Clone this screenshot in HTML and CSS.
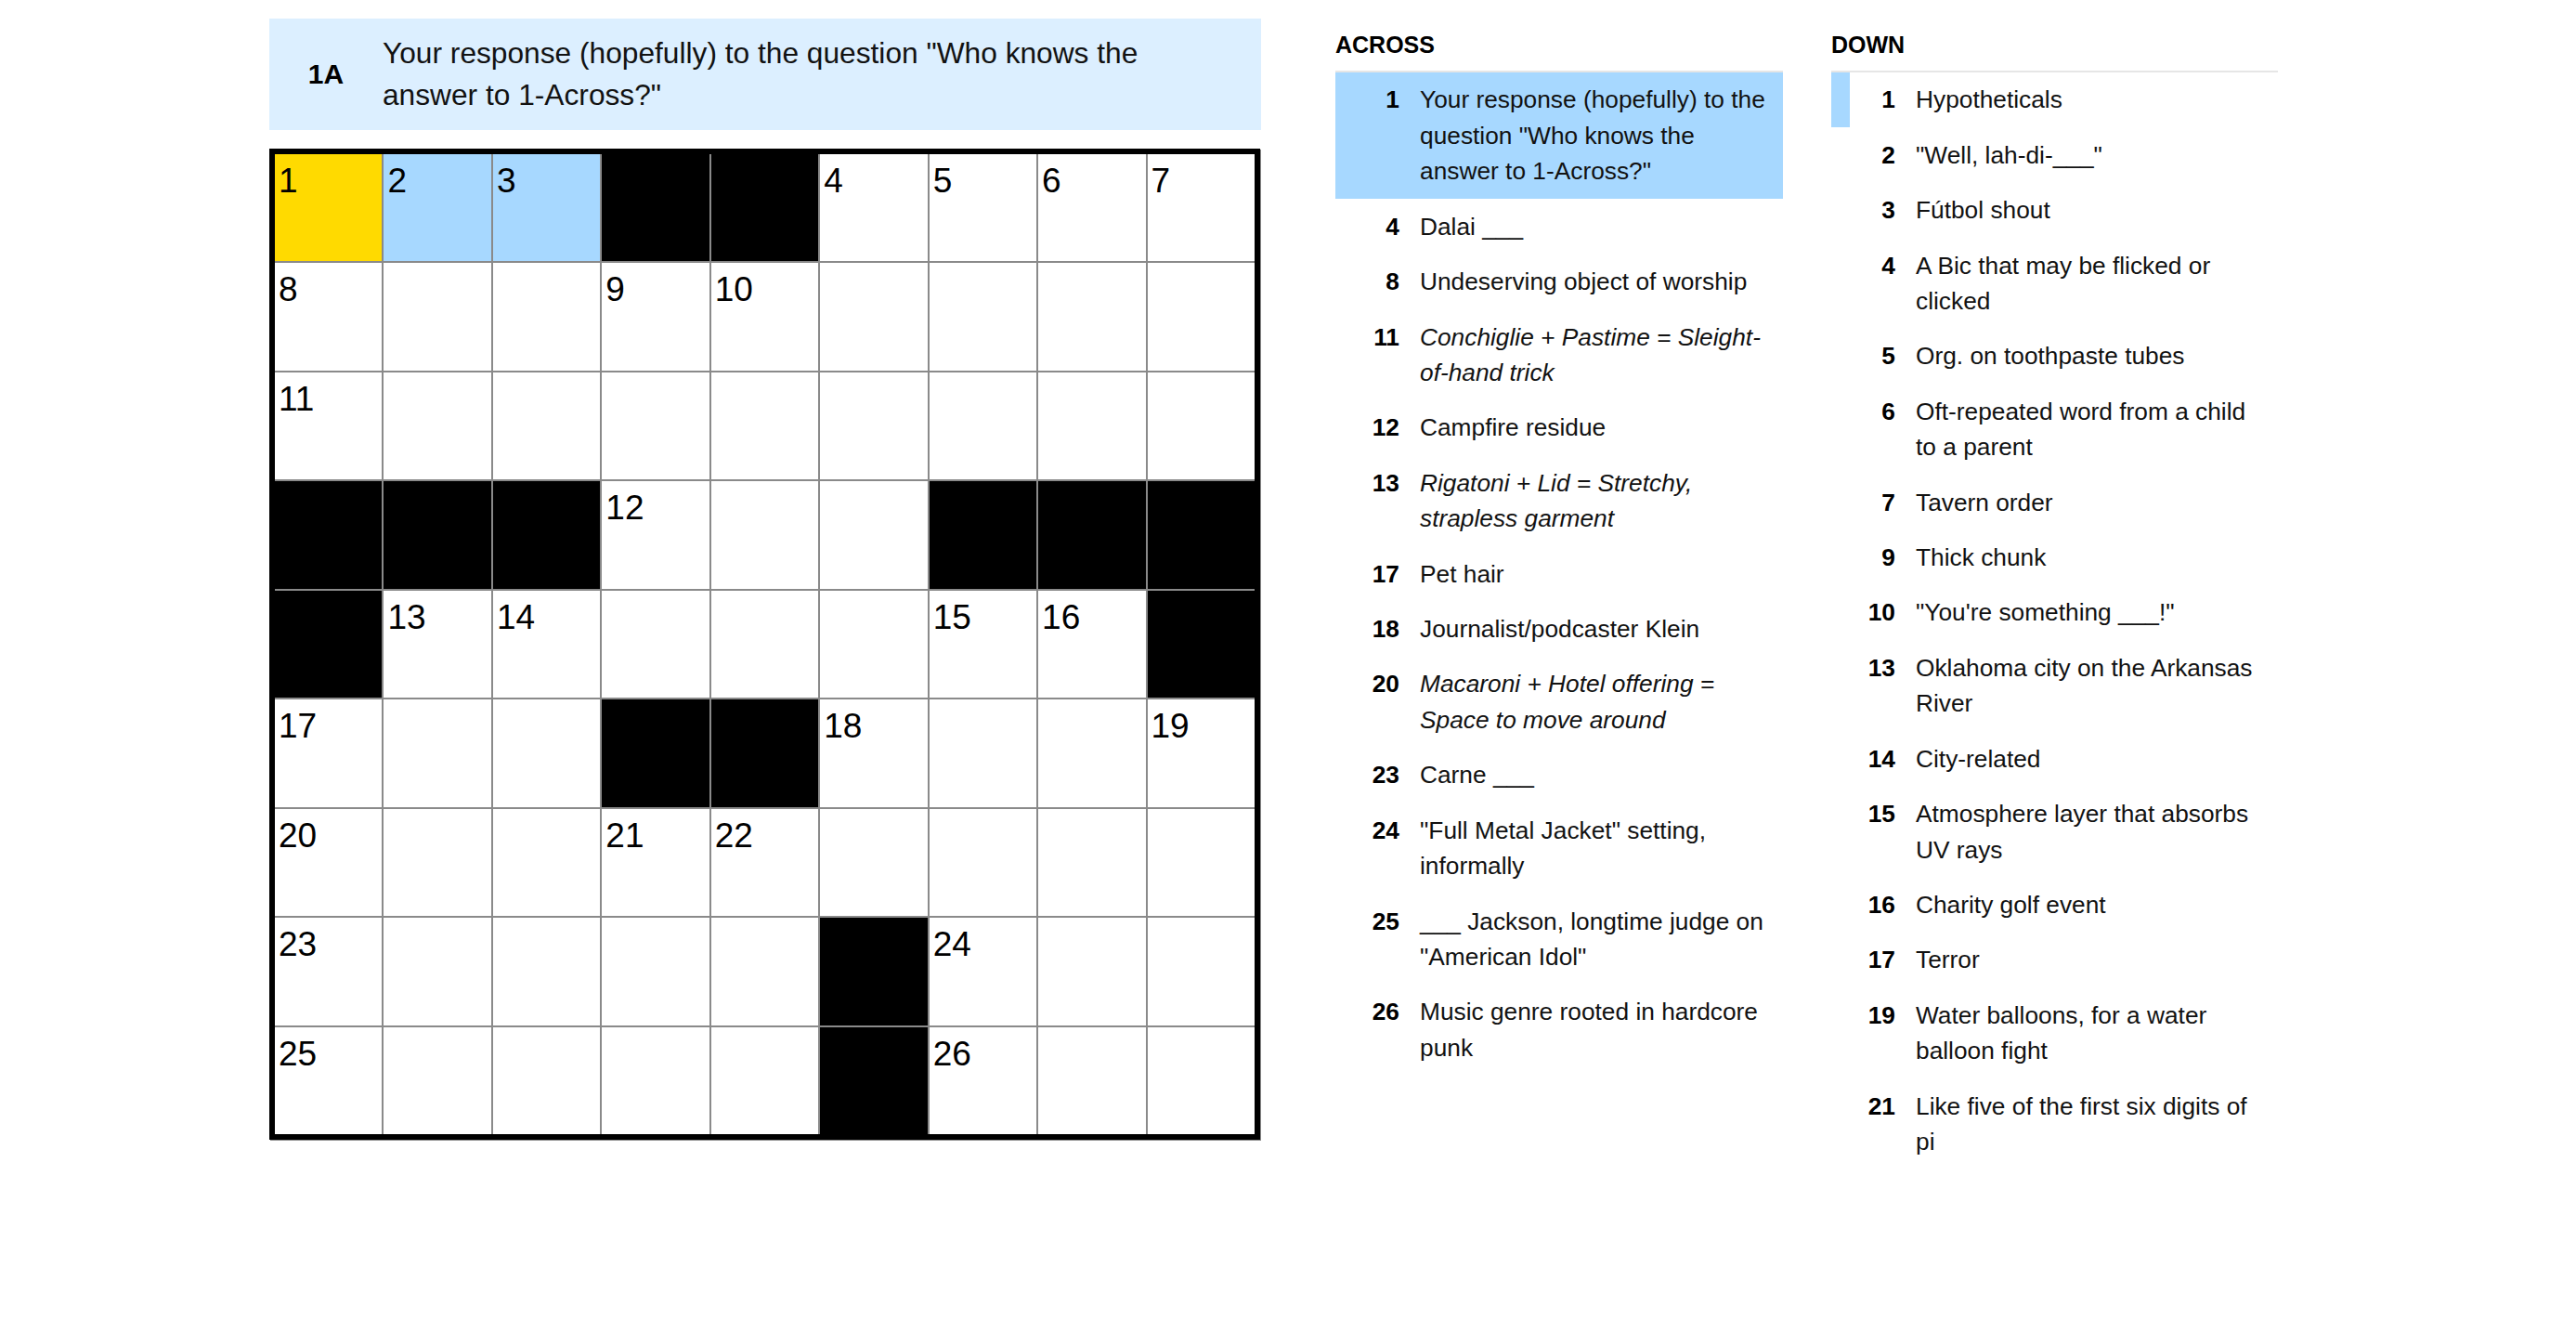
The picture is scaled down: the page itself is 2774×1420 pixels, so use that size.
FILE: index.html
```html
<!DOCTYPE html>
<html lang="en">
<head>
<meta charset="utf-8">
<title>Crossword</title>
<link rel="stylesheet" href="styles.css">
</head>
<body>
<div class="page">
  <section class="board">
    <div class="clue-bar">
      <span class="clue-bar-label">1A</span>
      <span class="clue-bar-text">Your response (hopefully) to the question "Who knows the answer to 1-Across?"</span>
    </div>
    <div class="grid">
      <div class="cell selected"><span class="num">1</span></div>
      <div class="cell highlighted"><span class="num">2</span></div>
      <div class="cell highlighted"><span class="num">3</span></div>
      <div class="cell block"></div>
      <div class="cell block"></div>
      <div class="cell"><span class="num">4</span></div>
      <div class="cell"><span class="num">5</span></div>
      <div class="cell"><span class="num">6</span></div>
      <div class="cell"><span class="num">7</span></div>

      <div class="cell"><span class="num">8</span></div>
      <div class="cell"></div>
      <div class="cell"></div>
      <div class="cell"><span class="num">9</span></div>
      <div class="cell"><span class="num">10</span></div>
      <div class="cell"></div>
      <div class="cell"></div>
      <div class="cell"></div>
      <div class="cell"></div>

      <div class="cell"><span class="num">11</span></div>
      <div class="cell"></div>
      <div class="cell"></div>
      <div class="cell"></div>
      <div class="cell"></div>
      <div class="cell"></div>
      <div class="cell"></div>
      <div class="cell"></div>
      <div class="cell"></div>

      <div class="cell block"></div>
      <div class="cell block"></div>
      <div class="cell block"></div>
      <div class="cell"><span class="num">12</span></div>
      <div class="cell"></div>
      <div class="cell"></div>
      <div class="cell block"></div>
      <div class="cell block"></div>
      <div class="cell block"></div>

      <div class="cell block"></div>
      <div class="cell"><span class="num">13</span></div>
      <div class="cell"><span class="num">14</span></div>
      <div class="cell"></div>
      <div class="cell"></div>
      <div class="cell"></div>
      <div class="cell"><span class="num">15</span></div>
      <div class="cell"><span class="num">16</span></div>
      <div class="cell block"></div>

      <div class="cell"><span class="num">17</span></div>
      <div class="cell"></div>
      <div class="cell"></div>
      <div class="cell block"></div>
      <div class="cell block"></div>
      <div class="cell"><span class="num">18</span></div>
      <div class="cell"></div>
      <div class="cell"></div>
      <div class="cell"><span class="num">19</span></div>

      <div class="cell"><span class="num">20</span></div>
      <div class="cell"></div>
      <div class="cell"></div>
      <div class="cell"><span class="num">21</span></div>
      <div class="cell"><span class="num">22</span></div>
      <div class="cell"></div>
      <div class="cell"></div>
      <div class="cell"></div>
      <div class="cell"></div>

      <div class="cell"><span class="num">23</span></div>
      <div class="cell"></div>
      <div class="cell"></div>
      <div class="cell"></div>
      <div class="cell"></div>
      <div class="cell block"></div>
      <div class="cell"><span class="num">24</span></div>
      <div class="cell"></div>
      <div class="cell"></div>

      <div class="cell"><span class="num">25</span></div>
      <div class="cell"></div>
      <div class="cell"></div>
      <div class="cell"></div>
      <div class="cell"></div>
      <div class="cell block"></div>
      <div class="cell"><span class="num">26</span></div>
      <div class="cell"></div>
      <div class="cell"></div>
    </div>
  </section>

  <div class="clue-lists">
    <section class="clue-list across">
      <h3 class="clue-list-title">ACROSS</h3>
      <ol class="clues">
        <li class="clue active"><span class="clue-num">1</span><span class="clue-text">Your response (hopefully) to the question "Who knows the answer to 1-Across?"</span></li>
        <li class="clue"><span class="clue-num">4</span><span class="clue-text">Dalai ___</span></li>
        <li class="clue"><span class="clue-num">8</span><span class="clue-text">Undeserving object of worship</span></li>
        <li class="clue"><span class="clue-num">11</span><span class="clue-text"><i>Conchiglie + Pastime = Sleight-of-hand trick</i></span></li>
        <li class="clue"><span class="clue-num">12</span><span class="clue-text">Campfire residue</span></li>
        <li class="clue"><span class="clue-num">13</span><span class="clue-text"><i>Rigatoni + Lid = Stretchy, strapless garment</i></span></li>
        <li class="clue"><span class="clue-num">17</span><span class="clue-text">Pet hair</span></li>
        <li class="clue"><span class="clue-num">18</span><span class="clue-text">Journalist/podcaster Klein</span></li>
        <li class="clue"><span class="clue-num">20</span><span class="clue-text"><i>Macaroni + Hotel offering = Space to move around</i></span></li>
        <li class="clue"><span class="clue-num">23</span><span class="clue-text">Carne ___</span></li>
        <li class="clue"><span class="clue-num">24</span><span class="clue-text">"Full Metal Jacket" setting, informally</span></li>
        <li class="clue"><span class="clue-num">25</span><span class="clue-text">___ Jackson, longtime judge on "American Idol"</span></li>
        <li class="clue"><span class="clue-num">26</span><span class="clue-text">Music genre rooted in hardcore punk</span></li>
      </ol>
    </section>

    <section class="clue-list down">
      <h3 class="clue-list-title">DOWN</h3>
      <ol class="clues">
        <li class="clue related"><span class="clue-num">1</span><span class="clue-text">Hypotheticals</span></li>
        <li class="clue"><span class="clue-num">2</span><span class="clue-text">"Well, lah-di-___"</span></li>
        <li class="clue"><span class="clue-num">3</span><span class="clue-text">Fútbol shout</span></li>
        <li class="clue"><span class="clue-num">4</span><span class="clue-text">A Bic that may be flicked or clicked</span></li>
        <li class="clue"><span class="clue-num">5</span><span class="clue-text">Org. on toothpaste tubes</span></li>
        <li class="clue"><span class="clue-num">6</span><span class="clue-text">Oft-repeated word from a child to a parent</span></li>
        <li class="clue"><span class="clue-num">7</span><span class="clue-text">Tavern order</span></li>
        <li class="clue"><span class="clue-num">9</span><span class="clue-text">Thick chunk</span></li>
        <li class="clue"><span class="clue-num">10</span><span class="clue-text">"You're something ___!"</span></li>
        <li class="clue"><span class="clue-num">13</span><span class="clue-text">Oklahoma city on the Arkansas River</span></li>
        <li class="clue"><span class="clue-num">14</span><span class="clue-text">City-related</span></li>
        <li class="clue"><span class="clue-num">15</span><span class="clue-text">Atmosphere layer that absorbs UV rays</span></li>
        <li class="clue"><span class="clue-num">16</span><span class="clue-text">Charity golf event</span></li>
        <li class="clue"><span class="clue-num">17</span><span class="clue-text">Terror</span></li>
        <li class="clue"><span class="clue-num">19</span><span class="clue-text">Water balloons, for a water balloon fight</span></li>
        <li class="clue"><span class="clue-num">21</span><span class="clue-text">Like five of the first six digits of pi</span></li>
      </ol>
    </section>
  </div>
</div>
</body>
</html>
```

FILE: styles.css
```css
html, body {
  margin: 0;
  padding: 0;
  background: #ffffff;
}

body {
  font-family: "Liberation Sans", Arial, sans-serif;
  color: #121212;
}

.page {
  display: flex;
  align-items: flex-start;
  gap: 80px;
  padding: 20px 0 0 290px;
}

/* ---------- board: clue bar + grid ---------- */

.board {
  width: 1068px;
  flex: none;
}

.clue-bar {
  display: flex;
  align-items: center;
  box-sizing: border-box;
  height: 119.5px;
  background: #dcefff;
  padding-right: 30px;
}

.clue-bar-label {
  flex: none;
  width: 122px;
  text-align: center;
  font-weight: 700;
  font-size: 30px;
  line-height: 1;
  color: #000;
}

.clue-bar-text {
  font-size: 31.7px;
  line-height: 44.3px;
}

.grid {
  margin-top: 20.5px;
  display: grid;
  grid-template-columns: repeat(9, 1fr);
  grid-template-rows: repeat(9, 1fr);
  gap: 2px;
  width: 1055px;
  height: 1055px;
  border: 6px solid #000;
  background: #8a8a8a;
  box-shadow: 1px 1px 0 #8a8a8a;
}

.cell {
  background: #fff;
  padding: 10px 0 0 4px;
  box-sizing: border-box;
  overflow: hidden;
}

.cell.block { background: #000; }
.cell.selected { background: #ffda00; }
.cell.highlighted { background: #a7d8ff; }

.num {
  display: block;
  font-size: 37px;
  line-height: 1;
  color: #000;
}

/* ---------- clue lists ---------- */

.clue-lists {
  display: flex;
  align-items: flex-start;
  gap: 52px;
}

.clue-list {
  flex: none;
  width: 482px;
}

.clue-list.down {
  width: 481px;
}

.clue-list-title {
  margin: 0;
  padding: 13px 0;
  font-size: 25px;
  line-height: 30px;
  font-weight: 700;
  color: #000;
  border-bottom: 2px solid #e6e6e6;
}

.clues {
  list-style: none;
  margin: 0;
  padding: 0;
}

.clue {
  display: flex;
  align-items: flex-start;
  padding: 10.45px 0;
  font-size: 26.3px;
  line-height: 38.5px;
}

.clue.active {
  background: #a7d8ff;
}

.clue.related {
  box-shadow: inset 20px 0 0 #a7d8ff;
}

.clue-num {
  flex: none;
  width: 69px;
  margin-right: 22px;
  text-align: right;
  font-weight: 700;
  color: #000;
}

.clue-text {
  width: 377px;
}

.clue-text i {
  font-style: italic;
}
```
